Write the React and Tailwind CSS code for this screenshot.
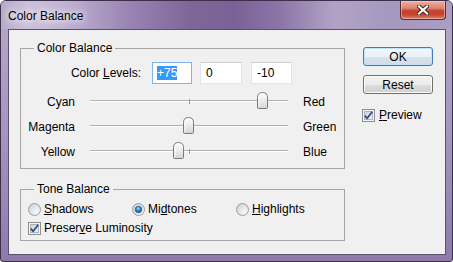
import React from "react";

function Thumb() {
  return (
    <svg width="11" height="17" viewBox="0 0 11 17">
      <defs>
        <linearGradient id="thumbFill" x1="0" y1="0" x2="0" y2="1">
          <stop offset="0" stopColor="#fbfbfb" />
          <stop offset="0.5" stopColor="#ececec" />
          <stop offset="1" stopColor="#d3d3d3" />
        </linearGradient>
      </defs>
      <path
        d="M1.5,16.5 L9.5,16.5 Q10.5,16.5 10.5,15.5 L10.5,5.5 Q10.5,0.5 5.5,0.5 Q0.5,0.5 0.5,5.5 L0.5,15.5 Q0.5,16.5 1.5,16.5 Z"
        fill="url(#thumbFill)"
        stroke="#7a7a7a"
      />
      <path d="M2,15 L2,6 Q2,2 5.5,2 Q9,2 9,6" fill="none" stroke="#ffffff" strokeOpacity="0.8" />
    </svg>
  );
}

function CheckBox({ checked }) {
  return (
    <svg width="13" height="13" viewBox="0 0 13 13" className="shrink-0">
      <defs>
        <linearGradient id="cbFill" x1="0" y1="0" x2="1" y2="1">
          <stop offset="0" stopColor="#cbcfd5" />
          <stop offset="1" stopColor="#f7f7f7" />
        </linearGradient>
      </defs>
      <rect x="0.5" y="0.5" width="12" height="12" fill="#f4f4f4" stroke="#8e8f8f" />
      <rect x="2.5" y="2.5" width="8" height="8" fill="url(#cbFill)" stroke="#aeb3b9" />
      {checked && (
        <path d="M2.8,6.6 L5.2,9.3 L10.2,2.8" fill="none" stroke="#304e8c" strokeWidth="1.8" strokeLinejoin="round" />
      )}
    </svg>
  );
}

function Radio({ checked }) {
  return (
    <svg width="13" height="13" viewBox="0 0 13 13" className="shrink-0">
      <defs>
        <radialGradient id="rdFill" cx="0.7" cy="0.7" r="0.8">
          <stop offset="0" stopColor="#fafafa" />
          <stop offset="1" stopColor="#cfd2d6" />
        </radialGradient>
        <radialGradient id="rdDot" cx="0.45" cy="0.35" r="0.7">
          <stop offset="0" stopColor="#a9dcff" />
          <stop offset="0.45" stopColor="#2d8ad0" />
          <stop offset="1" stopColor="#0b4a8a" />
        </radialGradient>
      </defs>
      <circle cx="6.5" cy="6.5" r="6" fill="url(#rdFill)" stroke="#9a9c9e" />
      {checked && <circle cx="6.5" cy="6.5" r="3.3" fill="url(#rdDot)" stroke="#1c4f7e" strokeWidth="0.6" />}
    </svg>
  );
}

function SliderRow({ left, right, value }) {
  const pos = 98.5 + value * 0.98;
  return (
    <div className="flex h-[25px] items-center">
      <div className="w-[54px] text-right">{left}</div>
      <div className="relative ml-[15px] flex h-full w-[198px] items-center">
        <div className="mb-[2px] h-[2px] w-full border-t border-b border-t-[#b0b0b0] border-b-white" />
        <div className="absolute left-[99px] top-[10px] h-[5px] w-px bg-[#9a9a9a]" />
        <div className="absolute top-[3px] flex" style={{ left: pos - 5.5 }}>
          <Thumb />
        </div>
      </div>
      <div className="ml-[15px]">{right}</div>
    </div>
  );
}

export default function App() {
  const sliders = [
    { left: "Cyan", right: "Red", value: 75 },
    { left: "Magenta", right: "Green", value: 0 },
    { left: "Yellow", right: "Blue", value: -10 },
  ];

  return (
    <div className="flex h-[262px] w-[453px] flex-col overflow-hidden rounded-t-[6px] rounded-b-[3px] border border-[#3a3049] bg-[linear-gradient(180deg,#b7a9ca_0%,#a695bf_50%,#8d7aab_100%)] font-['Liberation_Sans',Arial,sans-serif] text-[12px] leading-[14px] text-black">
      {/* title bar */}
      <div className="flex h-[28px] shrink-0 items-start justify-between bg-[linear-gradient(90deg,#b8aacb_0%,#cdc2dc_6%,#c1b3d3_14%,#9a85b4_28%,#7f6699_42%,#7b6296_52%,#8c76a8_62%,#b2a3c6_74%,#a697be_86%,#ac9dc4_100%)]">
        <div className="ml-[7px] mt-[8px] [text-shadow:0_0_6px_#ffffff,0_0_10px_#ffffff]">Color Balance</div>
        <div className="mr-[6px] flex h-[19px] w-[46px] items-center justify-center rounded-b-[4px] border border-t-0 border-[#5e2a2a] bg-[linear-gradient(180deg,#eab0a2_0%,#dc8470_40%,#c4402c_55%,#c7452f_75%,#d8816e_100%)] shadow-[inset_0_0_0_1px_rgba(255,220,210,0.5)]">
          <svg width="12" height="10" viewBox="0 0 12 10">
            <path d="M2,1.5 L10,8.5 M10,1.5 L2,8.5" stroke="#3b2020" strokeWidth="4" strokeLinecap="square" />
            <path d="M2,1.5 L10,8.5 M10,1.5 L2,8.5" stroke="#ffffff" strokeWidth="2.2" strokeLinecap="square" />
          </svg>
        </div>
      </div>

      {/* client area */}
      <div className="mb-[6px] ml-[7px] mr-[6px] flex flex-1 items-start border border-[#5b5070] bg-[#f0f0f0] pl-[11px] pt-[11px]">
        <div className="flex w-[325px] flex-col">
          <fieldset className="border border-[#a6a6a6] pb-[4px]">
            <legend className="ml-[13px] px-[3px] leading-[14px]">Color Balance</legend>
            <div className="mt-[7px] flex h-[22px] items-center">
              <div className="w-[120px] text-right">
                Color <u>L</u>evels:
              </div>
              <div className="ml-[11px] flex h-[22px] w-[40px] items-center border border-[#7eb4ea] bg-white pl-[4px]">
                <span className="bg-[#3399ff] text-white">+75</span>
              </div>
              <div className="ml-[8px] flex h-[22px] w-[42px] items-center border border-[#e1e4e8] border-t-[#c9ccd1] bg-white pl-[5px]">
                0
              </div>
              <div className="ml-[9px] flex h-[22px] w-[41px] items-center border border-[#e1e4e8] border-t-[#c9ccd1] bg-white pl-[5px]">
                -10
              </div>
            </div>
            <div className="mt-[5px] flex flex-col">
              {sliders.map((s) => (
                <SliderRow key={s.left} left={s.left} right={s.right} value={s.value} />
              ))}
            </div>
          </fieldset>

          <fieldset className="mt-[13px] border border-[#a6a6a6] pb-[4px] pl-[7px]">
            <legend className="ml-[6px] px-[3px] leading-[14px]">Tone Balance</legend>
            <div className="mt-[5px] flex h-[16px] items-center">
              <div className="flex w-[104px] items-center gap-[3px]">
                <Radio />
                <span>
                  <u>S</u>hadows
                </span>
              </div>
              <div className="flex w-[104px] items-center gap-[3px]">
                <Radio checked />
                <span>
                  Mi<u>d</u>tones
                </span>
              </div>
              <div className="flex items-center gap-[3px]">
                <Radio />
                <span>
                  <u>H</u>ighlights
                </span>
              </div>
            </div>
            <div className="mt-[3px] flex h-[16px] items-center gap-[3px]">
              <CheckBox checked />
              <span>
                Preser<u>v</u>e Luminosity
              </span>
            </div>
          </fieldset>
        </div>

        <div className="ml-[18px] flex flex-col">
          <div className="mt-[6px] flex h-[19px] w-[70px] items-center justify-center rounded-[3px] border border-[#3c7fb1] bg-[linear-gradient(180deg,#f4f8fb_0%,#e9f0f6_50%,#d9e3ec_51%,#cfdbe6_100%)] shadow-[inset_0_0_0_1px_#bfe3f8]">
            OK
          </div>
          <div className="mt-[9px] flex h-[19px] w-[70px] items-center justify-center rounded-[3px] border border-[#707070] bg-[linear-gradient(180deg,#f2f2f2_0%,#ebebeb_50%,#dddddd_51%,#cfcfcf_100%)] shadow-[inset_0_0_0_1px_#fcfcfc]">
            Reset
          </div>
          <div className="-ml-px mt-[13px] flex h-[16px] items-center gap-[4px]">
            <CheckBox checked />
            <span>
              <u>P</u>review
            </span>
          </div>
        </div>
      </div>
    </div>
  );
}
